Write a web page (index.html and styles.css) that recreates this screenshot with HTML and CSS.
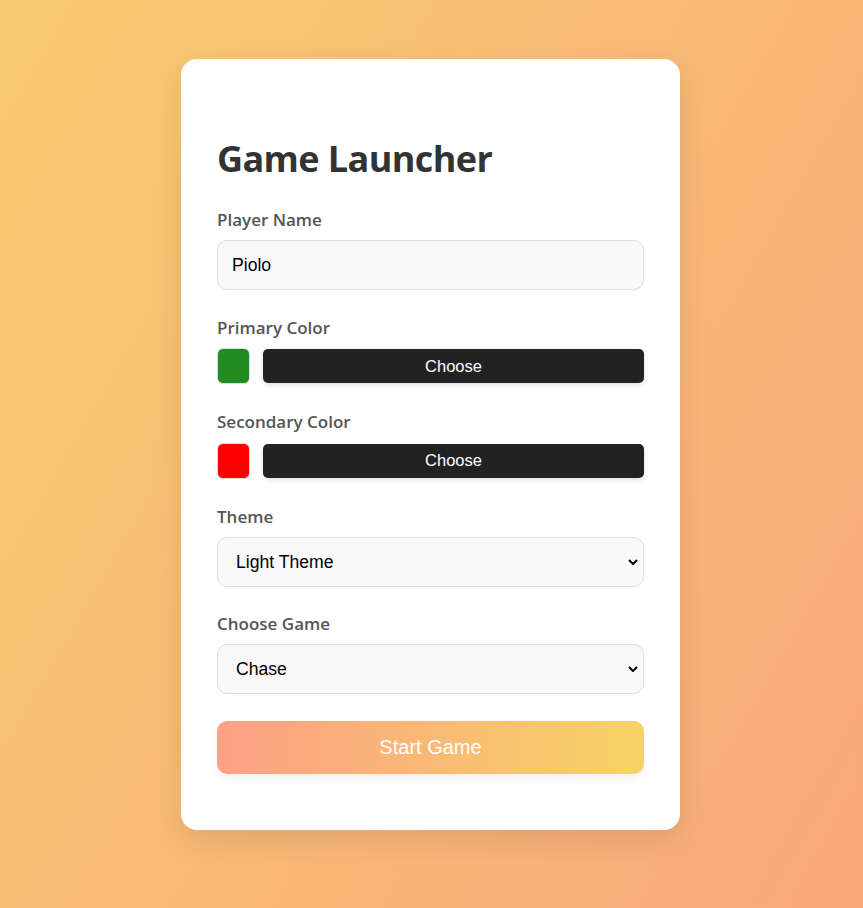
FILE: index.html
```html
<!DOCTYPE html>
<html lang="en">
<head>
<meta charset="utf-8">
<title>Game Launcher</title>
<link rel="stylesheet" href="styles.css">
</head>
<body>
  <main class="card">
    <h1 class="title">Game Launcher</h1>
    <div class="group">
      <label class="label" for="player">Player Name</label>
      <input class="field" id="player" type="text" value="Piolo">
    </div>
    <div class="group">
      <label class="label">Primary Color</label>
      <div class="color-row">
        <span class="swatch swatch-green"></span>
        <button class="choose" type="button">Choose</button>
      </div>
    </div>
    <div class="group">
      <label class="label">Secondary Color</label>
      <div class="color-row">
        <span class="swatch swatch-red"></span>
        <button class="choose" type="button">Choose</button>
      </div>
    </div>
    <div class="group">
      <label class="label" for="theme">Theme</label>
      <select class="field select" id="theme">
        <option>Light Theme</option>
        <option>Dark Theme</option>
      </select>
    </div>
    <div class="group">
      <label class="label" for="game">Choose Game</label>
      <select class="field select" id="game">
        <option>Chase</option>
      </select>
    </div>
    <button class="start" type="button">Start Game</button>
  </main>
</body>
</html>
```
FILE: styles.css
```css
html, body {
  margin: 0;
}
body {
  min-height: 100vh;
  box-sizing: border-box;
  padding: 59px 2px 0 0;
  display: flex;
  justify-content: center;
  align-items: flex-start;
  background: linear-gradient(120deg, #f8cb70 0%, #f9a97b 100%);
  font-family: "Open Sans", "Noto Sans", sans-serif;
}
.card {
  width: 499px;
  box-sizing: border-box;
  padding: 77px 36px 56px;
  background: #fff;
  border-radius: 16px;
  box-shadow: 0 10px 30px rgba(0, 0, 0, 0.1);
  display: flex;
  flex-direction: column;
}
.title {
  margin: 0 0 27px;
  font-size: 36px;
  line-height: 46px;
  letter-spacing: -0.6px;
  font-weight: 700;
  color: #333;
}
.group {
  display: flex;
  flex-direction: column;
  margin-bottom: 26.5px;
}
.label {
  display: block;
  font-size: 17px;
  line-height: 22px;
  font-weight: 600;
  color: #555;
  margin-bottom: 9px;
}
.field {
  box-sizing: border-box;
  width: 100%;
  height: 50px;
  margin: 0;
  padding: 0 14px;
  border: 1px solid #ddd;
  border-radius: 10px;
  background-color: #f9f9f9;
  font-family: "Liberation Sans", Arial, sans-serif;
  font-size: 17.6px;
  color: #000;
  outline: none;
}
.select {
  -webkit-appearance: none;
  appearance: none;
  padding: 0 24px 0 18px;
  background-image: url("data:image/svg+xml,%3Csvg xmlns='http://www.w3.org/2000/svg' width='10' height='6' viewBox='0 0 10 6'%3E%3Cpath d='M1 1 L5 5 L9 1' fill='none' stroke='%23000' stroke-width='2'/%3E%3C/svg%3E");
  background-repeat: no-repeat;
  background-position: right 5px center;
  background-size: 10px 6px;
}
.color-row {
  display: flex;
  align-items: center;
  gap: 13px;
  height: 37px;
}
.swatch {
  width: 33px;
  height: 36px;
  box-sizing: border-box;
  border: 1px solid #ddd;
  border-radius: 6px;
  flex: none;
}
.swatch-green { background: #228b22; }
.swatch-red { background: #ff0000; }
.choose {
  flex: 1;
  height: 34px;
  border: none;
  border-radius: 5px;
  background: #222;
  color: #fff;
  font-family: "Liberation Sans", Arial, sans-serif;
  font-size: 16.5px;
  box-shadow: 0 2px 5px rgba(0, 0, 0, 0.12);
}
.start {
  height: 53px;
  border: none;
  border-radius: 10px;
  background: linear-gradient(to right, #fda085, #f6d365);
  color: #fff;
  font-family: "Liberation Sans", Arial, sans-serif;
  font-size: 20px;
  box-shadow: 0 4px 10px rgba(0, 0, 0, 0.06);
}
```
